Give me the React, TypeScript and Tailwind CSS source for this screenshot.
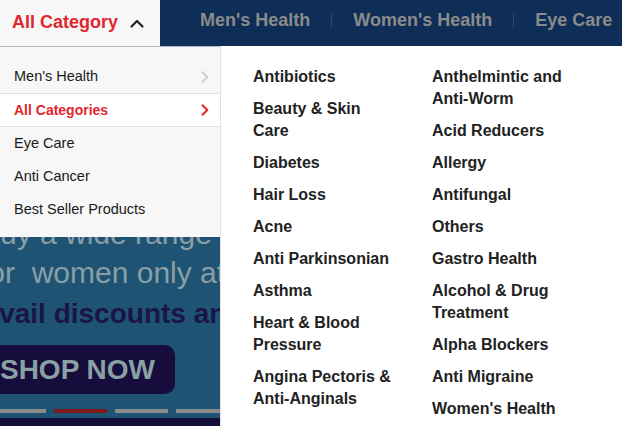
import React from "react";

const col1 = [
  "Antibiotics",
  "Beauty & Skin Care",
  "Diabetes",
  "Hair Loss",
  "Acne",
  "Anti Parkinsonian",
  "Asthma",
  "Heart & Blood Pressure",
  "Angina Pectoris & Anti-Anginals",
];
const col2 = [
  "Anthelmintic and Anti-Worm",
  "Acid Reducers",
  "Allergy",
  "Antifungal",
  "Others",
  "Gastro Health",
  "Alcohol & Drug Treatment",
  "Alpha Blockers",
  "Anti Migraine",
  "Women's Health",
];

function ChevronRight({ color }: { color: string }) {
  return (
    <svg width="8" height="12" viewBox="0 0 8 12" fill="none">
      <path d="M1.5 1.2 L6.3 6 L1.5 10.8" stroke={color} strokeWidth="2" strokeLinecap="round" strokeLinejoin="round" />
    </svg>
  );
}

export default function App() {
  return (
    <div className="w-[622px] h-[426px] overflow-hidden flex flex-col font-['Liberation_Sans',Arial,sans-serif]">
      <header className="h-[46px] flex shrink-0">
        <div className="w-[160px] bg-[#f8f8f8] flex items-center pl-[12px] gap-[12px]">
          <span className="text-[18px] font-bold text-[#e3262c] leading-none mb-[2px]">All Category</span>
          <svg width="14" height="9" viewBox="0 0 14 9" fill="none">
            <path d="M1.5 7.5 L7 2 L12.5 7.5" stroke="#222" strokeWidth="2.2" strokeLinecap="round" strokeLinejoin="round" />
          </svg>
        </div>
        <nav className="flex-1 bg-[#0e2e57] flex items-center pl-[40px] gap-[21px] text-[18px] font-bold text-[#8b8b8b] whitespace-nowrap">
          <span className="mb-[6px]">Men's Health</span>
          <span className="w-px h-[15px] bg-[#2a4870] mb-[6px]" />
          <span className="mb-[6px]">Women's Health</span>
          <span className="w-px h-[15px] bg-[#2a4870] mb-[6px]" />
          <span className="mb-[6px]">Eye Care</span>
        </nav>
      </header>

      <div className="flex flex-1 min-h-0">
        <div className="w-[221px] flex flex-col shrink-0">
          <div className="h-[191px] bg-[#f7f7f7] border-t border-t-[#b2bac8] border-r border-r-[#e3e3e3] pt-[14px] pb-[11px] text-[14.5px] text-[#1a1a1a] flex flex-col shrink-0">
            <div className="h-[33px] flex items-center justify-between pl-[14px] pr-[11px] border-b border-b-[#e2e2e2]">
              <span>Men's Health</span>
              <ChevronRight color="#cccccc" />
            </div>
            <div className="h-[33px] flex items-center justify-between pl-[14px] pr-[11px] bg-white border-b border-b-[#e2e2e2]">
              <span className="font-bold text-[14px] text-[#e3262c]">All Categories</span>
              <ChevronRight color="#e3262c" />
            </div>
            <div className="h-[33px] flex items-center pl-[14px]">Eye Care</div>
            <div className="h-[33px] flex items-center pl-[14px]">Anti Cancer</div>
            <div className="h-[33px] flex items-center pl-[14px]">Best Seller Products</div>
          </div>

          <div className="flex-1 bg-[#1e5374] overflow-hidden flex flex-col border-r border-r-[#e3e3e3]">
            <div className="mt-[-23px] ml-[-20px] text-[30px] leading-[39px] text-[#8a9fa4] whitespace-nowrap">Buy a wide range of</div>
            <div className="ml-[-20px] text-[30px] leading-[39px] text-[#8a9fa4] whitespace-nowrap">for{"\u00a0"} women only at</div>
            <div className="mt-[2px] ml-[-20px] text-[28px] leading-[40px] font-bold text-[#1b1547] whitespace-nowrap">Avail discounts and</div>
            <div className="mt-[11px] ml-[-20px] w-[195px] h-[49px] rounded-[10px] bg-[#170d3c] flex items-center justify-center text-[28px] font-bold text-[#8aa1a3] whitespace-nowrap">
              SHOP NOW
            </div>
            <div className="mt-[15px] ml-[-7px] flex gap-[8px] shrink-0">
              <span className="w-[53px] h-[4px] bg-[#8a8a8a] shrink-0" />
              <span className="w-[53px] h-[4px] bg-[#7c1a1a] shrink-0" />
              <span className="w-[53px] h-[4px] bg-[#8a8a8a] shrink-0" />
              <span className="w-[53px] h-[4px] bg-[#8a8a8a] shrink-0" />
            </div>
            <div className="mt-[5px] flex-1 bg-[#160f3a]" />
          </div>
        </div>

        <div className="flex-1 bg-white pl-[32px] pt-[20px] flex gap-[36px]">
          <div className="w-[143px] flex flex-col gap-[10px]">
            {col1.map((t) => (
              <div key={t} className="text-[16px] leading-[22px] font-bold text-[#222]">{t}</div>
            ))}
          </div>
          <div className="w-[150px] flex flex-col gap-[10px]">
            {col2.map((t) => (
              <div key={t} className="text-[16px] leading-[22px] font-bold text-[#222]">{t}</div>
            ))}
          </div>
        </div>
      </div>
    </div>
  );
}
